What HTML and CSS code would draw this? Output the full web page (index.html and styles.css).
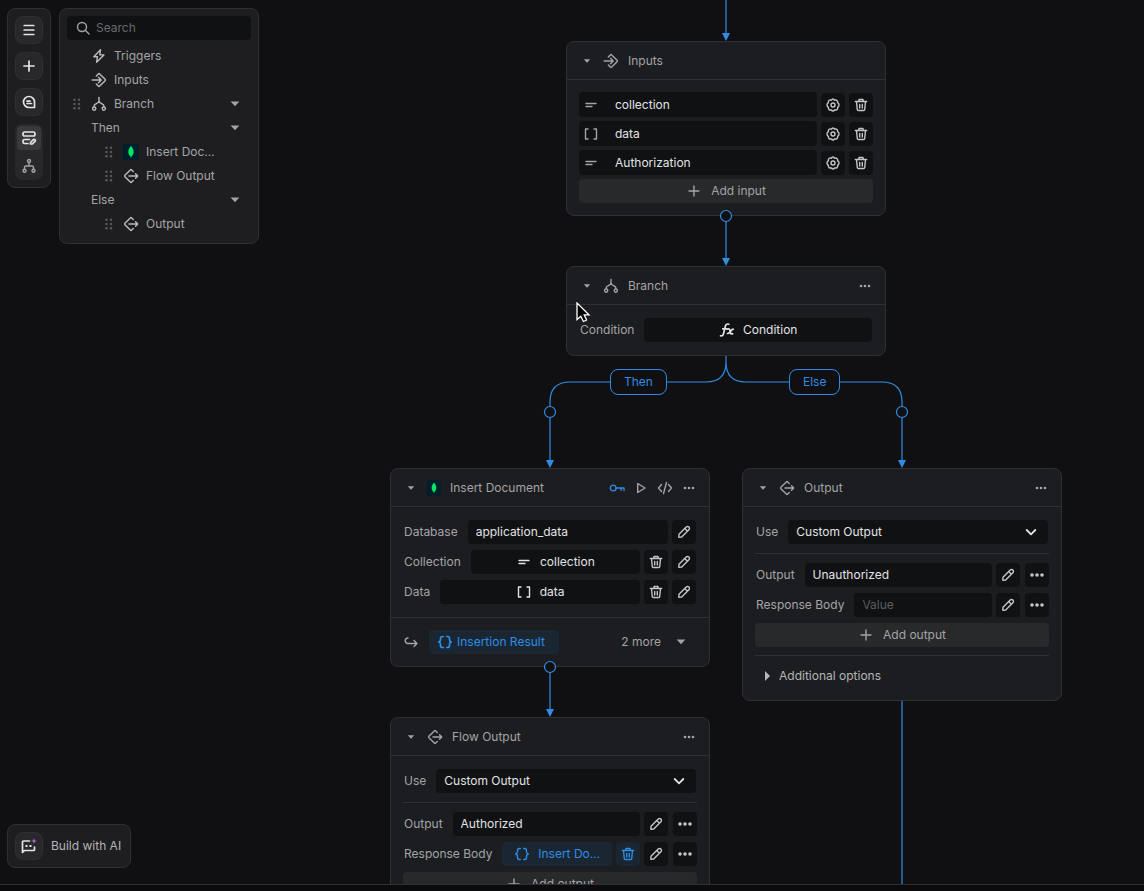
FILE: index.html
```html
<!DOCTYPE html>
<html lang="en">
<head>
<meta charset="utf-8">
<title>Flow editor</title>
<link rel="stylesheet" href="styles.css">
</head>
<body>
<svg class="sprite" aria-hidden="true">
  <symbol id="menu" viewBox="0 0 16 16"><path d="M3.200 3.500h9.600M3.200 8h9.600M3.200 12.500h9.600"/></symbol>
  <symbol id="plus" viewBox="0 0 16 16"><path d="M8 3v10M3 8h10"/></symbol>
  <symbol id="comment" viewBox="0 0 16 16"><path d="M8 2.500a5.500 5.500 0 0 0 0 11h5.500V8A5.500 5.500 0 0 0 8 2.500zM6 7.200h3M6 9.500h4.500"/></symbol>
  <symbol id="edit-list" viewBox="0 0 16 16"><rect x="2" y="2" width="12" height="4" rx="1.800"/><path d="M7 13.500H3.500A1.500 1.500 0 0 1 2 12v-1a1.500 1.500 0 0 1 1.500-1.500H8.500M9.500 14v-1.500l2.800-2.800a1.200 1.200 0 0 1 1.700 0 1.200 1.200 0 0 1 0 1.700L11.300 14z"/></symbol>
  <symbol id="tree" viewBox="0 0 16 16"><circle cx="8" cy="3" r="1.500"/><circle cx="3.500" cy="12.700" r="1.500"/><circle cx="12.500" cy="12.700" r="1.500"/><path d="M8 4.500V8M3.500 11v-1.500C3.500 8.500 4 8 5 8h6c1 0 1.500.5 1.500 1.500V11"/></symbol>
  <symbol id="search" viewBox="0 0 16 16"><circle cx="7" cy="7" r="4.500"/><path d="M10.300 10.300 14 14"/></symbol>
  <symbol id="bolt" viewBox="0 0 16 16"><path d="M9.500 1.800 2.800 8.800h3.700l-.9 5.400 7.300-7.300H8.800z"/></symbol>
  <symbol id="inputs" viewBox="0 0 16 16"><path d="M5.300 4 7.300 1.900a1 1 0 0 1 1.400 0l5.400 5.400a1 1 0 0 1 0 1.400l-5.400 5.400a1 1 0 0 1-1.400 0L5.300 12M1.200 8h8.800M7.500 5.300 10.200 8l-2.700 2.700"/></symbol>
  <symbol id="output" viewBox="0 0 16 16"><path d="M10.300 3.500 8.700 1.900a1 1 0 0 0-1.400 0L1.900 7.300a1 1 0 0 0 0 1.400l5.400 5.400a1 1 0 0 0 1.400 0l1.600-1.600M6 8h8.500M12.500 5.800 14.700 8l-2.200 2.200"/></symbol>
  <symbol id="branch" viewBox="0 0 16 16"><circle cx="3.200" cy="12.600" r="1.600"/><circle cx="12.800" cy="12.600" r="1.600"/><path d="M8 1.500V5M3.200 10.600V9.500C3.200 7.500 8 7.500 8 5c0 2.500 4.800 2.500 4.800 4.500v1.100"/></symbol>
  <symbol id="grip" viewBox="0 0 16 16"><g class="solid"><circle cx="5.500" cy="3.800" r="1.200"/><circle cx="10" cy="3.800" r="1.200"/><circle cx="5.500" cy="8" r="1.200"/><circle cx="10" cy="8" r="1.200"/><circle cx="5.500" cy="12.200" r="1.200"/><circle cx="10" cy="12.200" r="1.200"/></g></symbol>
  <symbol id="caret" viewBox="0 0 16 16"><path class="solid" d="M3.700 5.600h8.600L8 10.300z"/></symbol>
  <symbol id="caret-small" viewBox="0 0 16 16"><path class="solid" d="M4.800 6.300h6.400L8 9.700z"/></symbol>
  <symbol id="caret-right" viewBox="0 0 16 16"><path class="solid" d="M6 3v10l5-5z"/></symbol>
  <symbol id="leaf" viewBox="0 0 16 16"><path class="leaf" d="M8 2c4 4 3 8.500.3 10.800L8 14.500l-.3-1.700C5 10.500 4 6 8 2z"/></symbol>
  <symbol id="text" viewBox="0 0 16 16"><path d="M3 6.500h10M3 9.500h6"/></symbol>
  <symbol id="list" viewBox="0 0 16 16"><path d="M5 3H2.500v10H5M11 3h2.500v10H11"/></symbol>
  <symbol id="object" viewBox="0 0 16 16"><path d="M6.300 2.500H5.500C4 2.500 3.500 3.200 3.500 4.500v1.300C3.500 7 3 7.600 1.700 8 3 8.400 3.500 9 3.500 10.200v1.300c0 1.300.5 2 2 2h.8M9.700 2.500h.8c1.500 0 2 .7 2 2v1.300c0 1.200.5 1.800 1.800 2.200-1.300.4-1.800 1-1.800 2.200v1.300c0 1.300-.5 2-2 2h-.8"/></symbol>
  <symbol id="gear" viewBox="0 0 16 16"><path d="M8 2Q9 2 9.500 3.200 10.700 2.600 11.800 3.300T12.600 5.600Q14 6.500 14 8t-1.400 2.400Q12.900 12 12 12.600t-2.500.3Q9 14 8 14t-1.500-1.100Q4.900 13.200 4.100 12.600T3.400 10.400Q2 9.500 2 8t1.400-2.400Q3.100 4 4.100 3.300t2.400-.1Q7 2 8 2z"/><circle cx="8" cy="8" r="2"/></symbol>
  <symbol id="trash" viewBox="0 0 16 16"><path d="M2.300 4.500h11.400M5.500 4.500l.6-2h3.800l.6 2M3.500 4.500l.8 8.200a1 1 0 0 0 1 .8h5.400a1 1 0 0 0 1-.8l.8-8.200M6.700 7.500V11M9.300 7.500V11"/></symbol>
  <symbol id="pencil" viewBox="0 0 16 16"><path d="M2.800 13.200 3 10.300l7.200-7.200a1.900 1.900 0 0 1 2.700 2.700L5.700 13zM9 4.800 11.200 7"/></symbol>
  <symbol id="dots" viewBox="0 0 16 16"><g class="solid"><circle cx="4" cy="8" r="1.300"/><circle cx="8" cy="8" r="1.300"/><circle cx="12" cy="8" r="1.300"/></g></symbol>
  <symbol id="dots-large" viewBox="0 0 16 16"><g class="solid"><circle cx="3" cy="8" r="1.800"/><circle cx="8" cy="8" r="1.800"/><circle cx="13" cy="8" r="1.800"/></g></symbol>
  <symbol id="fx" viewBox="0 0 16 16"><path d="M1.500 13.800c2 .6 2.600-.5 3.200-2.800L6.200 4.800C6.800 2.500 7.700 1.600 9.800 2.200M3.800 6.800h4.400M8.800 7.200c1.700-.8 2 .3 2.300 2.300.3 2 .8 2.900 2.500 2.200M14.300 7.200c-2-.6-3 4.700-5.800 4.300"/></symbol>
  <symbol id="key" viewBox="0 0 16 16"><circle cx="4.200" cy="8" r="2.900"/><path d="M7.100 8H15v2.500M12 8v2.200"/></symbol>
  <symbol id="play" viewBox="0 0 16 16"><path d="M4.700 3.500v9l7.300-4.500z"/></symbol>
  <symbol id="code" viewBox="0 0 16 16"><path d="M4.500 4.500 1.500 8l3 3.500M11.500 4.500l3 3.500-3 3.500M9.500 2.500l-3 11"/></symbol>
  <symbol id="return" viewBox="0 0 16 16"><path d="M5 4H4.500a2.800 2.800 0 0 0 0 5.500H14M11 6.500l3 3-3 3"/></symbol>
  <symbol id="chevron" viewBox="0 0 16 16"><path d="m3.700 6 4.300 4.300L12.300 6"/></symbol>
  <symbol id="ai" viewBox="0 0 16 16"><path d="M8.500 3H2.500a1 1 0 0 0-1 1v10.500l2-2h9a1 1 0 0 0 1-1V9"/><path class="solid" d="M4.500 7h2v2h-2zM8.500 7h2v2h-2z"/><path class="spark" d="M13 0c.4 2 1 2.700 3 3-2 .3-2.600 1-3 3-.4-2-1-2.700-3-3 2-.3 2.600-1 3-3z"/></symbol>
</svg>

<div class="app">
  <main class="canvas">
    <svg class="edges" aria-hidden="true">
      <g class="wires">
        <path d="M726 0v36M726 216v44M726 355v7q0 20-20 20H570q-20 0-20 20v60M726 355v7q0 20 20 20h136q20 0 20 20v60M550 667v44M902 700v191"/>
      </g>
      <path class="heads" d="M722 33h8l-4 8zM722 258h8l-4 8zM546 460h8l-4 8zM898 460h8l-4 8zM546 709h8l-4 8z"/>
    </svg>

    <span class="edge-label then">Then</span>
    <span class="edge-label else">Else</span>

    <section class="node node-inputs">
      <header class="node-head">
        <button class="fold" aria-label="Collapse"><svg class="icon"><use href="#caret-small"/></svg></button>
        <svg class="icon"><use href="#inputs"/></svg>
        <h2>Inputs</h2>
      </header>
      <div class="node-body tight">
        <div class="row"><label class="named"><svg class="icon"><use href="#text"/></svg><input value="collection" aria-label="Input name"></label><button class="square" aria-label="Settings"><svg class="icon"><use href="#gear"/></svg></button><button class="square" aria-label="Delete"><svg class="icon"><use href="#trash"/></svg></button></div>
        <div class="row"><label class="named"><svg class="icon"><use href="#list"/></svg><input value="data" aria-label="Input name"></label><button class="square" aria-label="Settings"><svg class="icon"><use href="#gear"/></svg></button><button class="square" aria-label="Delete"><svg class="icon"><use href="#trash"/></svg></button></div>
        <div class="row"><label class="named"><svg class="icon"><use href="#text"/></svg><input value="Authorization" aria-label="Input name"></label><button class="square" aria-label="Settings"><svg class="icon"><use href="#gear"/></svg></button><button class="square" aria-label="Delete"><svg class="icon"><use href="#trash"/></svg></button></div>
        <button class="add"><svg class="icon"><use href="#plus"/></svg>Add input</button>
      </div>
    </section>

    <section class="node node-branch">
      <header class="node-head">
        <button class="fold" aria-label="Collapse"><svg class="icon"><use href="#caret-small"/></svg></button>
        <svg class="icon"><use href="#branch"/></svg>
        <h2>Branch</h2>
        <button class="action" aria-label="More"><svg class="icon"><use href="#dots"/></svg></button>
      </header>
      <div class="node-body">
        <div class="row"><span class="label">Condition</span><button class="value"><svg class="icon bold"><use href="#fx"/></svg>Condition</button></div>
      </div>
    </section>

    <section class="node node-insert">
      <header class="node-head">
        <button class="fold" aria-label="Collapse"><svg class="icon"><use href="#caret-small"/></svg></button>
        <svg class="icon brand"><use href="#leaf"/></svg>
        <h2>Insert Document</h2>
        <button class="action blue" aria-label="Credentials"><svg class="icon"><use href="#key"/></svg></button>
        <button class="action" aria-label="Run"><svg class="icon"><use href="#play"/></svg></button>
        <button class="action" aria-label="Code"><svg class="icon"><use href="#code"/></svg></button>
        <button class="action" aria-label="More"><svg class="icon"><use href="#dots"/></svg></button>
      </header>
      <div class="node-body">
        <div class="row"><label class="label" for="database">Database</label><input class="field" id="database" value="application_data"><button class="square" aria-label="Edit"><svg class="icon"><use href="#pencil"/></svg></button></div>
        <div class="row"><span class="label">Collection</span><button class="value"><svg class="icon"><use href="#text"/></svg>collection</button><button class="square" aria-label="Delete"><svg class="icon"><use href="#trash"/></svg></button><button class="square" aria-label="Edit"><svg class="icon"><use href="#pencil"/></svg></button></div>
        <div class="row"><span class="label">Data</span><button class="value"><svg class="icon"><use href="#list"/></svg>data</button><button class="square" aria-label="Delete"><svg class="icon"><use href="#trash"/></svg></button><button class="square" aria-label="Edit"><svg class="icon"><use href="#pencil"/></svg></button></div>
      </div>
      <footer class="node-foot">
        <svg class="icon"><use href="#return"/></svg>
        <button class="result"><svg class="icon bold"><use href="#object"/></svg>Insertion Result</button>
        <button class="more">2 more<svg class="icon"><use href="#caret"/></svg></button>
      </footer>
    </section>

    <section class="node node-output">
      <header class="node-head">
        <button class="fold" aria-label="Collapse"><svg class="icon"><use href="#caret-small"/></svg></button>
        <svg class="icon"><use href="#output"/></svg>
        <h2>Output</h2>
        <button class="action" aria-label="More"><svg class="icon"><use href="#dots"/></svg></button>
      </header>
      <div class="node-body wide">
        <div class="row"><label class="label" for="use-else">Use</label><span class="picker"><select id="use-else"><option>Custom Output</option></select><svg class="icon"><use href="#chevron"/></svg></span></div>
        <div class="group">
          <div class="row"><label class="label" for="out-else">Output</label><input class="field" id="out-else" value="Unauthorized"><button class="square" aria-label="Edit"><svg class="icon"><use href="#pencil"/></svg></button><button class="square" aria-label="More"><svg class="icon"><use href="#dots-large"/></svg></button></div>
          <div class="row"><label class="label" for="body-else">Response Body</label><input class="field" id="body-else" placeholder="Value"><button class="square" aria-label="Edit"><svg class="icon"><use href="#pencil"/></svg></button><button class="square" aria-label="More"><svg class="icon"><use href="#dots-large"/></svg></button></div>
          <button class="add"><svg class="icon"><use href="#plus"/></svg>Add output</button>
        </div>
        <div class="group">
          <button class="options"><svg class="icon"><use href="#caret-right"/></svg>Additional options</button>
        </div>
      </div>
    </section>

    <section class="node node-flow">
      <header class="node-head">
        <button class="fold" aria-label="Collapse"><svg class="icon"><use href="#caret-small"/></svg></button>
        <svg class="icon"><use href="#output"/></svg>
        <h2>Flow Output</h2>
        <button class="action" aria-label="More"><svg class="icon"><use href="#dots"/></svg></button>
      </header>
      <div class="node-body wide">
        <div class="row"><label class="label" for="use-then">Use</label><span class="picker"><select id="use-then"><option>Custom Output</option></select><svg class="icon"><use href="#chevron"/></svg></span></div>
        <div class="group">
          <div class="row"><label class="label" for="out-then">Output</label><input class="field" id="out-then" value="Authorized"><button class="square" aria-label="Edit"><svg class="icon"><use href="#pencil"/></svg></button><button class="square" aria-label="More"><svg class="icon"><use href="#dots-large"/></svg></button></div>
          <div class="row"><span class="label">Response Body</span><button class="value linked"><svg class="icon"><use href="#object"/></svg>Insert Do…</button><button class="square linked" aria-label="Delete"><svg class="icon"><use href="#trash"/></svg></button><button class="square" aria-label="Edit"><svg class="icon"><use href="#pencil"/></svg></button><button class="square" aria-label="More"><svg class="icon"><use href="#dots-large"/></svg></button></div>
          <button class="add"><svg class="icon"><use href="#plus"/></svg>Add output</button>
        </div>
      </div>
    </section>

    <svg class="ports" aria-hidden="true">
      <circle cx="726" cy="216" r="5.500"/><circle cx="550" cy="412" r="5.500"/><circle cx="902" cy="412" r="5.500"/><circle cx="550" cy="667" r="5.500"/>
    </svg>

    <div class="overlay">
      <div class="panels">
        <nav class="toolbar" aria-label="Tools">
          <button class="tool" aria-label="Menu"><svg class="icon bold"><use href="#menu"/></svg></button>
          <button class="tool" aria-label="Add"><svg class="icon bold"><use href="#plus"/></svg></button>
          <button class="tool" aria-label="Comments"><svg class="icon bold"><use href="#comment"/></svg></button>
          <div class="switch">
            <button class="mode active" aria-label="Editor view"><svg class="icon bold"><use href="#edit-list"/></svg></button>
            <button class="mode" aria-label="Tree view"><svg class="icon"><use href="#tree"/></svg></button>
          </div>
        </nav>
        <aside class="outline">
          <label class="search"><svg class="icon"><use href="#search"/></svg><input type="search" placeholder="Search" aria-label="Search"></label>
          <ul class="steps">
            <li class="step"><span class="handle"></span><svg class="icon"><use href="#bolt"/></svg><span class="name">Triggers</span></li>
            <li class="step"><span class="handle"></span><svg class="icon"><use href="#inputs"/></svg><span class="name">Inputs</span></li>
            <li class="step"><span class="handle"><svg class="icon"><use href="#grip"/></svg></span><svg class="icon"><use href="#branch"/></svg><span class="name">Branch</span><button class="toggle" aria-label="Collapse Branch"><svg class="icon"><use href="#caret"/></svg></button></li>
            <li class="step path"><span class="name">Then</span><button class="toggle" aria-label="Collapse Then"><svg class="icon"><use href="#caret"/></svg></button></li>
            <li class="step child"><span class="handle"><svg class="icon"><use href="#grip"/></svg></span><svg class="icon brand"><use href="#leaf"/></svg><span class="name">Insert Doc…</span></li>
            <li class="step child"><span class="handle"><svg class="icon"><use href="#grip"/></svg></span><svg class="icon"><use href="#output"/></svg><span class="name">Flow Output</span></li>
            <li class="step path"><span class="name">Else</span><button class="toggle" aria-label="Collapse Else"><svg class="icon"><use href="#caret"/></svg></button></li>
            <li class="step child"><span class="handle"><svg class="icon"><use href="#grip"/></svg></span><svg class="icon"><use href="#output"/></svg><span class="name">Output</span></li>
          </ul>
        </aside>
      </div>
      <button class="build"><span class="tool"><svg class="icon bold"><use href="#ai"/></svg></span>Build with AI</button>
    </div>

    <svg class="pointer" viewBox="0 0 16 22" aria-hidden="true"><path d="M1 1v16.500l3.800-3.300 2.600 5.300 3.200-1.500-2.400-5.200H13z"/></svg>
  </main>
  <div class="status"></div>
</div>
</body>
</html>
```
FILE: styles.css
```css
* { box-sizing: border-box; }

:root {
  --canvas: #101012;
  --panel: #1e1e20;
  --node: #1c1d20;
  --field: #101113;
  --line: #2e3033;
  --text: #a3a4a7;
  --bright: #e2e3e5;
  --blue: #2f8ce3;
  --blue-bg: #1a2733;
}

body {
  margin: 0;
  background: var(--canvas);
  color: var(--text);
  font: 12px/24px Inter, sans-serif;
}

button, input, select {
  margin: 0;
  padding: 0;
  border: 0;
  background: none;
  color: inherit;
  font: inherit;
  outline: 0;
}

button {
  display: flex;
  align-items: center;
  justify-content: center;
}

input { min-width: 0; height: 24px; }

.sprite { position: absolute; width: 0; height: 0; }

.icon {
  width: 16px;
  height: 16px;
  flex: none;
  fill: none;
  stroke: currentColor;
  stroke-width: 1.4;
  stroke-linecap: round;
  stroke-linejoin: round;
}
.icon.bold { stroke-width: 1.7; }
.solid { fill: currentColor; stroke: none; }
.brand { background: #021e2b; }
.leaf { fill: #00e765; stroke: none; }
.spark { fill: #b069dc; stroke: none; }

.app {
  display: flex;
  flex-direction: column;
  height: 100vh;
}

.canvas {
  position: relative;
  flex: 1;
  overflow: hidden;
}

.status {
  height: 7px;
  border-top: 1px solid var(--line);
  background: #0b0b0d;
}

/* Flow diagram */
.edges, .ports {
  position: absolute;
  inset: 0;
  width: 100%;
  height: 100%;
  pointer-events: none;
}
.wires { fill: none; stroke: #308de4; stroke-width: 1.2; }
.heads { fill: #308de4; }
.ports circle { fill: var(--canvas); stroke: #308de4; stroke-width: 1.2; }

.edge-label {
  position: absolute;
  padding: 0 13px;
  border: 1px solid var(--blue);
  border-radius: 8px;
  background: var(--canvas);
  color: var(--blue);
}
.then { left: 610px; top: 369px; }
.else { left: 789px; top: 369px; }

.node {
  position: absolute;
  width: 320px;
  border: 1px solid var(--line);
  border-radius: 8px;
  background: var(--node);
}
.node-inputs { left: 566px; top: 41px; }
.node-branch { left: 566px; top: 266px; }
.node-insert { left: 390px; top: 468px; }
.node-output { left: 742px; top: 468px; }
.node-flow { left: 390px; top: 717px; }

.node-head {
  display: flex;
  align-items: center;
  height: 38px;
  padding: 0 8px 0 12px;
  border-bottom: 1px solid var(--line);
}
.node-head h2 {
  flex: 1;
  margin: 0 0 0 9px;
  font-size: 12px;
  font-weight: 400;
}
.node-head .brand { width: 14px; }
.fold { margin-right: 8px; }
.action { width: 24px; height: 24px; }
.blue { color: var(--blue); }

.node-body {
  display: flex;
  flex-direction: column;
  gap: 6px;
  padding: 13px;
}
.node-body.tight { gap: 4px; padding: 12px; }
.node-body.wide { padding: 13px 12px 12px; }

.row { display: flex; align-items: center; gap: 4px; }
.label { margin-right: 6px; }
.wide .row { padding-left: 1px; }
.wide > .row { padding-right: 1px; }
.wide .square:last-child { margin-left: 1px; }

.named, .field, .value, .picker, .square {
  border-radius: 4px;
  background: var(--field);
  color: var(--bright);
}
.named, .field, .value, .picker { flex: 1; min-width: 0; }

.named {
  display: flex;
  align-items: center;
  gap: 16px;
  height: 25px;
  padding-left: 4px;
}
.named .icon { color: var(--text); }
.named input { flex: 1; }

.field { padding: 0 8px; }
.field::placeholder { color: #5b5c60; opacity: 1; }

.value { gap: 8px; height: 24px; }
.square { width: 24px; height: 24px; color: #c4c5c8; flex: none; }
.linked { background: var(--blue-bg); color: var(--blue); }

.picker { display: grid; align-items: center; }
.picker select {
  grid-area: 1 / 1;
  height: 24px;
  padding: 0 8px;
  appearance: none;
}
.picker .icon {
  grid-area: 1 / 1;
  justify-self: end;
  margin-right: 9px;
  stroke-width: 1.8;
  pointer-events: none;
}

.add {
  gap: 9px;
  height: 24px;
  border-radius: 4px;
  background: #28292b;
}

.group {
  display: flex;
  flex-direction: column;
  gap: 6px;
  margin-top: 3px;
  padding-top: 9px;
  border-top: 1px solid var(--line);
}
.group + .group { margin-top: 2px; padding-top: 8px; }
.options { gap: 4px; padding-left: 4px; color: #b4b5b8; align-self: start; }

.node-foot {
  display: flex;
  align-items: center;
  padding: 12px 20px 12px 12px;
  border-top: 1px solid var(--line);
}
.result {
  gap: 4px;
  height: 24px;
  margin: 0 auto 0 10px;
  padding: 0 14px 0 8px;
  border-radius: 4px;
  background: var(--blue-bg);
  color: var(--blue);
}
.more { gap: 12px; }

/* Floating panels */
.overlay {
  position: absolute;
  inset: 0;
  display: flex;
  flex-direction: column;
  justify-content: space-between;
  align-items: flex-start;
  padding: 8px 8px 16px 7px;
  pointer-events: none;
}
.panels { display: flex; align-items: flex-start; gap: 8px; }

.toolbar, .outline, .build {
  padding: 7px;
  border: 1px solid var(--line);
  border-radius: 8px;
  background: var(--panel);
  pointer-events: auto;
}
.toolbar { display: flex; flex-direction: column; gap: 8px; }

.tool {
  display: flex;
  align-items: center;
  justify-content: center;
  width: 28px;
  height: 28px;
  border: 1px solid #303033;
  border-radius: 8px;
  background: #28282b;
  color: #e4e4e6;
}
.switch {
  display: flex;
  flex-direction: column;
  align-items: center;
  gap: 4px;
  padding: 2px;
  border-radius: 8px;
  background: #28282b;
}
.mode { width: 24px; height: 24px; border-radius: 4px; }
.mode.active { background: #39393c; color: #e4e4e6; }

.outline { width: 200px; }
.search {
  display: flex;
  align-items: center;
  gap: 5px;
  height: 24px;
  padding: 0 8px;
  border-radius: 4px;
  background: var(--field);
}
.search input { flex: 1; }
.search input::placeholder { color: #68696d; opacity: 1; }

.steps {
  margin: 4px 0 0;
  padding: 0;
  list-style: none;
}
.step {
  display: flex;
  align-items: center;
  height: 24px;
  padding-right: 4px;
}
.step > .icon:not(.brand) { color: #bbbcbf; }
.handle { display: flex; width: 24px; padding-left: 2px; color: #5a5b5e; }
.step .name { flex: 1; margin-left: 7px; white-space: nowrap; }
.path { padding-left: 24px; }
.step.path .name { margin-left: 0; }
.child { padding-left: 32px; }
.toggle { width: 24px; height: 24px; }

.build { display: flex; gap: 8px; padding-right: 9px; color: #b4b5b8; }

.pointer {
  position: absolute;
  left: 576px;
  top: 302px;
  width: 16px;
  height: 22px;
  fill: #000;
  stroke: #fff;
  stroke-width: 1.3;
}
```
